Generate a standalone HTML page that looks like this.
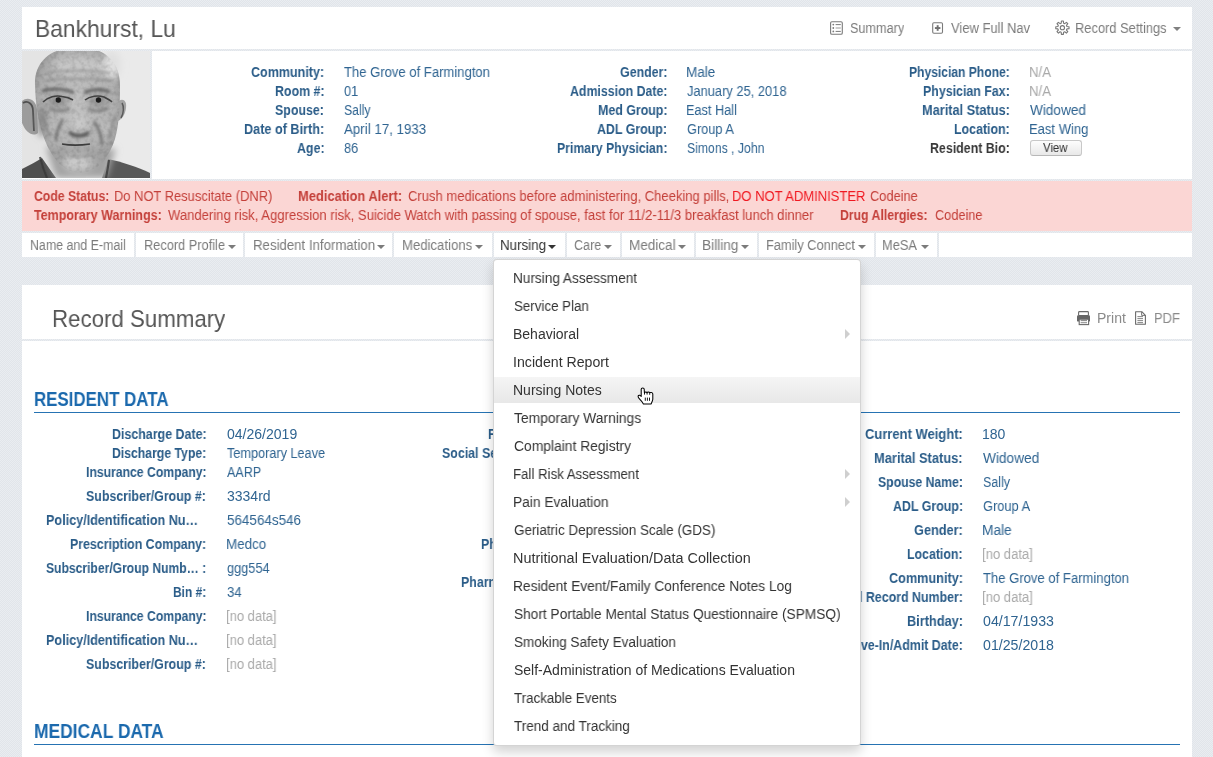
<!DOCTYPE html>
<html><head><meta charset="utf-8"><style>
html,body{margin:0;padding:0;}
body{width:1213px;height:757px;overflow:hidden;position:relative;background:#e5e9ee;background-image:repeating-conic-gradient(#e1e5ea 0 25%,#eaedf1 0 50%);background-size:2px 2px;font-family:"Liberation Sans",sans-serif;}
.t{position:absolute;white-space:nowrap;line-height:1;will-change:transform;transform-origin:0 0;}
</style></head><body>
<div style="position:absolute;left:22px;top:7px;width:1170px;height:42px;background:#fff;"></div>
<div class="t" style="left:34.55px;top:17.00px;font-size:24px;color:#555;transform:scaleX(0.9503);">Bankhurst, Lu</div>
<svg style="position:absolute;left:826px;top:16px" width="24" height="24" viewBox="0 0 24 24">
<rect x="4.6" y="5.7" width="11.7" height="12.6" rx="1.3" fill="none" stroke="#7a7a7a" stroke-width="1.1"/>
<circle cx="7.3" cy="8.6" r="0.9" fill="#7a7a7a"/><circle cx="7.3" cy="12" r="0.9" fill="#7a7a7a"/><circle cx="7.3" cy="15.4" r="0.9" fill="#7a7a7a"/>
<rect x="9.6" y="8.1" width="5.2" height="1" fill="#7a7a7a"/><rect x="9.6" y="11.5" width="5.2" height="1" fill="#999"/><rect x="9.6" y="14.9" width="5.2" height="1" fill="#7a7a7a"/>
</svg>
<div class="t" style="left:849.80px;top:21.00px;font-size:14px;color:#7b7b7b;transform:scaleX(0.9049);">Summary</div>
<svg style="position:absolute;left:926px;top:16px" width="24" height="24" viewBox="0 0 24 24">
<rect x="6.7" y="6.8" width="9.8" height="10.4" rx="1.2" fill="none" stroke="#7a7a7a" stroke-width="1.1"/>
<rect x="10.7" y="9.2" width="1.9" height="5.6" fill="#6f6f6f"/><rect x="8.9" y="11.1" width="5.5" height="1.9" fill="#6f6f6f"/>
</svg>
<div class="t" style="left:950.60px;top:21.00px;font-size:14px;color:#7b7b7b;transform:scaleX(0.9270);">View Full Nav</div>
<svg style="position:absolute;left:1050px;top:16px" width="24" height="24" viewBox="0 0 24 24">
<polygon points="11.18,7.16 11.41,5.07 13.39,5.07 13.62,7.16 14.75,7.63 16.39,6.31 17.79,7.71 16.47,9.35 16.94,10.48 19.03,10.71 19.03,12.69 16.94,12.92 16.47,14.05 17.79,15.69 16.39,17.09 14.75,15.77 13.62,16.24 13.39,18.33 11.41,18.33 11.18,16.24 10.05,15.77 8.41,17.09 7.01,15.69 8.33,14.05 7.86,12.92 5.77,12.69 5.77,10.71 7.86,10.48 8.33,9.35 7.01,7.71 8.41,6.31 10.05,7.63" fill="none" stroke="#777" stroke-width="1.1" stroke-linejoin="round"/>
<circle cx="12.4" cy="11.7" r="2.1" fill="none" stroke="#777" stroke-width="1.1"/>
</svg>
<div class="t" style="left:1075.08px;top:21.00px;font-size:14px;color:#7b7b7b;transform:scaleX(0.9198);">Record Settings</div>
<div style="position:absolute;left:1172.5px;top:26.5px;width:0;height:0;border-left:4px solid transparent;border-right:4px solid transparent;border-top:4px solid #808080;"></div>
<div style="position:absolute;left:22px;top:49px;width:1170px;height:2px;background:#e5e9ee;background-image:repeating-conic-gradient(#e1e5ea 0 25%,#eaedf1 0 50%);background-size:2px 2px;"></div>
<div style="position:absolute;left:22px;top:51px;width:1170px;height:128px;background:#fff;"></div>
<div style="position:absolute;left:150px;top:51px;width:2px;height:128px;background:#e5e9ee;background-image:repeating-conic-gradient(#e1e5ea 0 25%,#eaedf1 0 50%);background-size:2px 2px;"></div>
<div style="position:absolute;left:22px;top:179px;width:1170px;height:2px;background:#e5e9ee;background-image:repeating-conic-gradient(#e1e5ea 0 25%,#eaedf1 0 50%);background-size:2px 2px;"></div>
<svg style="position:absolute;left:22px;top:51px" width="128" height="127" viewBox="0 0 128 127">
<defs>
<radialGradient id="face" cx="0.5" cy="0.45" r="0.62"><stop offset="0" stop-color="#c2c2c2"/><stop offset="0.7" stop-color="#b0b0b0"/><stop offset="1" stop-color="#8e8e8e"/></radialGradient>
<filter id="bl" x="-20%" y="-20%" width="140%" height="140%"><feGaussianBlur stdDeviation="0.7"/></filter>
<filter id="bl2" x="-50%" y="-50%" width="200%" height="200%"><feGaussianBlur stdDeviation="1.4"/></filter>
<filter id="bl3" x="-50%" y="-50%" width="200%" height="200%"><feGaussianBlur stdDeviation="3.5"/></filter>
<filter id="tex" x="0" y="0" width="100%" height="100%"><feTurbulence type="fractalNoise" baseFrequency="0.22" numOctaves="2" seed="5"/><feColorMatrix type="matrix" values="0 0 0 0 0  0 0 0 0 0  0 0 0 0 0  0 0 0 1.2 -0.5"/><feComposite in2="SourceGraphic" operator="in"/></filter>
</defs>
<rect width="128" height="127" fill="#e4e4e4"/>
<rect x="64" width="64" height="127" fill="#eaeaea"/>
<g filter="url(#bl)">
<path d="M0,50 C6,45 14,49 15,58 L16,82 C11,86 4,82 0,72 Z" fill="#9c9c9c"/>
<path d="M1,52 C6,49 11,53 11,60 L12,80" stroke="#505050" stroke-width="1.8" fill="none"/>
<path d="M97,50 C101,47 105,50 104,57 C103,64 100,68 96,70 Z" fill="#a4a4a4"/>
<path d="M100,52 C102,55 102,62 99,67" stroke="#5a5a5a" stroke-width="1.5" fill="none"/>
<path d="M0,127 L0,118 C8,114 15,110 20,107 L34,127 Z" fill="#505050"/>
<path d="M128,127 L128,122 C116,116 100,111 86,108 L80,127 Z" fill="#585858"/>
<path d="M13,34 C12,10 30,-4 56,-4 C82,-4 98,10 98,34 C98,56 97,74 93,88 C87,106 78,118 64,121 C52,124 40,118 32,106 C22,92 14,70 13,34 Z" fill="url(#face)"/>
</g>
<g filter="url(#bl3)">
<path d="M24,96 L34,127 L84,127 L94,98 Z" fill="#a2a2a2"/>
<ellipse cx="90" cy="14" rx="9" ry="14" fill="#e0e0e0"/>
<ellipse cx="56" cy="16" rx="26" ry="10" fill="#c6c6c6"/>
<ellipse cx="20" cy="70" rx="5" ry="16" fill="#8a8a8a"/>
<ellipse cx="56" cy="112" rx="15" ry="8" fill="#cbcbcb"/>
<ellipse cx="57" cy="72" rx="7" ry="8" fill="#cacaca"/>
<ellipse cx="30" cy="76" rx="7" ry="8" fill="#b8b8b8"/>
<ellipse cx="84" cy="76" rx="6" ry="8" fill="#bcbcbc"/>
<ellipse cx="36" cy="50" rx="10" ry="6" fill="#8e8e8e"/>
<ellipse cx="76" cy="50" rx="10" ry="6" fill="#929292"/>
</g>
<path d="M13,34 C12,10 30,-4 56,-4 C82,-4 98,10 98,34 C98,56 97,74 93,88 C87,106 78,118 64,121 C52,124 40,118 32,106 C22,92 14,70 13,34 Z" fill="#000" filter="url(#tex)" opacity="0.22"/>
<g filter="url(#bl2)">
<path d="M24,22 C36,19 70,19 88,22 M22,30 C36,27 72,27 90,30" stroke="#8a8a8a" stroke-width="1.3" fill="none"/>
<path d="M20,40 C28,37 42,37 52,42" stroke="#555" stroke-width="2.6" fill="none"/>
<path d="M62,42 C70,38 80,38 88,41" stroke="#5a5a5a" stroke-width="2.6" fill="none"/>
<path d="M28,57 C33,61 42,61 48,57 M66,57 C71,61 80,61 86,57" stroke="#6e6e6e" stroke-width="1.8" fill="none"/>
<path d="M47,81 C52,86 62,86 67,81" stroke="#505050" stroke-width="3.2" fill="none"/>
<path d="M41,68 C36,76 34,84 34,90" stroke="#5c5c5c" stroke-width="2" fill="none"/>
<path d="M72,70 C77,78 80,86 80,94" stroke="#5c5c5c" stroke-width="2" fill="none"/>
<path d="M20,64 C22,72 25,80 29,86 M93,64 C91,74 89,82 86,88" stroke="#7c7c7c" stroke-width="1.5" fill="none"/>
<path d="M50,104 C55,106 62,106 68,104" stroke="#888" stroke-width="1.4" fill="none"/>
</g>
<g filter="url(#bl)">
<path d="M21,51 C26,46 34,44 40,45.5 C45,46 48,47 51,49" stroke="#404040" stroke-width="1.6" fill="none"/>
<path d="M63,49 C68,45 76,44 82,46 C86,48 89,50 90,51" stroke="#404040" stroke-width="1.6" fill="none"/>
<circle cx="36.3" cy="49" r="2.7" fill="#1e1e1e"/>
<circle cx="76.5" cy="49" r="2.7" fill="#1e1e1e"/>
<path d="M40,93 C48,94.5 58,94.5 68,93" stroke="#3c3c3c" stroke-width="1.7" fill="none"/>
<path d="M18,106 C20,114 22,120 25,127 M87,109 C86,116 85,122 84,127" stroke="#3a3a3a" stroke-width="2.2" fill="none" opacity="0.8"/>
</g>
</svg>
<div class="t" style="left:251.00px;top:65.00px;font-size:14px;color:#2a5c88;font-weight:bold;transform:scaleX(0.8951);">Community:</div>
<div class="t" style="left:344.00px;top:65.00px;font-size:14px;color:#2f6491;transform:scaleX(0.9331);">The Grove of Farmington</div>
<div class="t" style="left:274.53px;top:84.00px;font-size:14px;color:#2a5c88;font-weight:bold;transform:scaleX(0.8850);">Room #:</div>
<div class="t" style="left:344.00px;top:84.00px;font-size:14px;color:#2f6491;transform:scaleX(0.9122);">01</div>
<div class="t" style="left:275.21px;top:103.00px;font-size:14px;color:#2a5c88;font-weight:bold;transform:scaleX(0.8850);">Spouse:</div>
<div class="t" style="left:344.00px;top:103.00px;font-size:14px;color:#2f6491;transform:scaleX(0.8766);">Sally</div>
<div class="t" style="left:243.90px;top:122.00px;font-size:14px;color:#2a5c88;font-weight:bold;transform:scaleX(0.9045);">Date of Birth:</div>
<div class="t" style="left:344.00px;top:122.00px;font-size:14px;color:#2f6491;transform:scaleX(0.9514);">April 17, 1933</div>
<div class="t" style="left:296.55px;top:141.00px;font-size:14px;color:#2a5c88;font-weight:bold;transform:scaleX(0.8850);">Age:</div>
<div class="t" style="left:344.00px;top:141.00px;font-size:14px;color:#2f6491;transform:scaleX(0.9122);">86</div>
<div class="t" style="left:619.59px;top:65.00px;font-size:14px;color:#2a5c88;font-weight:bold;transform:scaleX(0.8850);">Gender:</div>
<div class="t" style="left:686.34px;top:65.00px;font-size:14px;color:#2f6491;transform:scaleX(0.9642);">Male</div>
<div class="t" style="left:569.60px;top:84.00px;font-size:14px;color:#2a5c88;font-weight:bold;transform:scaleX(0.8825);">Admission Date:</div>
<div class="t" style="left:687.30px;top:84.00px;font-size:14px;color:#2f6491;transform:scaleX(0.9197);">January 25, 2018</div>
<div class="t" style="left:597.58px;top:103.00px;font-size:14px;color:#2a5c88;font-weight:bold;transform:scaleX(0.8850);">Med Group:</div>
<div class="t" style="left:686.39px;top:103.00px;font-size:14px;color:#2f6491;transform:scaleX(0.9088);">East Hall</div>
<div class="t" style="left:596.89px;top:122.00px;font-size:14px;color:#2a5c88;font-weight:bold;transform:scaleX(0.8850);">ADL Group:</div>
<div class="t" style="left:687.30px;top:122.00px;font-size:14px;color:#2f6491;transform:scaleX(0.9129);">Group A</div>
<div class="t" style="left:556.70px;top:141.00px;font-size:14px;color:#2a5c88;font-weight:bold;transform:scaleX(0.8756);">Primary Physician:</div>
<div class="t" style="left:687.30px;top:141.00px;font-size:14px;color:#2f6491;transform:scaleX(0.8723);">Simons , John</div>
<div class="t" style="left:909.00px;top:65.00px;font-size:14px;color:#2a5c88;font-weight:bold;transform:scaleX(0.8635);">Physician Phone:</div>
<div class="t" style="left:1029.36px;top:65.00px;font-size:14px;color:#a8a8a8;transform:scaleX(0.9435);">N/A</div>
<div class="t" style="left:923.02px;top:84.00px;font-size:14px;color:#2a5c88;font-weight:bold;transform:scaleX(0.8850);">Physician Fax:</div>
<div class="t" style="left:1029.36px;top:84.00px;font-size:14px;color:#a8a8a8;transform:scaleX(0.9435);">N/A</div>
<div class="t" style="left:921.90px;top:103.00px;font-size:14px;color:#2a5c88;font-weight:bold;transform:scaleX(0.9113);">Marital Status:</div>
<div class="t" style="left:1030.30px;top:103.00px;font-size:14px;color:#2f6491;transform:scaleX(0.9720);">Widowed</div>
<div class="t" style="left:954.04px;top:122.00px;font-size:14px;color:#2a5c88;font-weight:bold;transform:scaleX(0.8850);">Location:</div>
<div class="t" style="left:1029.37px;top:122.00px;font-size:14px;color:#2f6491;transform:scaleX(0.9304);">East Wing</div>
<div class="t" style="left:929.94px;top:141.00px;font-size:14px;color:#383838;font-weight:bold;transform:scaleX(0.8850);">Resident Bio:</div>
<div style="position:absolute;left:1030px;top:139.5px;width:51.5px;height:16.5px;border:1px solid #c8c8c8;border-bottom-color:#b8b8b8;border-radius:3px;background:linear-gradient(#fdfdfd,#e8e8e8);box-sizing:border-box;"></div>
<div class="t" style="left:1043.00px;top:141.00px;font-size:13px;color:#333;transform:scaleX(0.8755);">View</div>
<div style="position:absolute;left:22px;top:181px;width:1170px;height:50px;background:#fbd6d4;"></div>
<div class="t" style="left:34.30px;top:189.00px;font-size:14px;color:#c4403a;font-weight:bold;transform:scaleX(0.8719);">Code Status:</div>
<div class="t" style="left:114.28px;top:189.00px;font-size:14px;color:#c4403a;transform:scaleX(0.9221);">Do NOT Resuscitate (DNR)</div>
<div class="t" style="left:297.60px;top:189.00px;font-size:14px;color:#c4403a;font-weight:bold;transform:scaleX(0.9203);">Medication Alert:</div>
<div class="t" style="left:408.40px;top:189.00px;font-size:14px;color:#c4403a;transform:scaleX(0.9303);">Crush medications before administering, Cheeking pills,</div>
<div class="t" style="left:731.77px;top:189.00px;font-size:14px;color:#f01820;transform:scaleX(0.9285);">DO NOT ADMINISTER</div>
<div class="t" style="left:869.70px;top:189.00px;font-size:14px;color:#c4403a;transform:scaleX(0.9166);">Codeine</div>
<div class="t" style="left:34.30px;top:208.00px;font-size:14px;color:#c4403a;font-weight:bold;transform:scaleX(0.8921);">Temporary Warnings:</div>
<div class="t" style="left:168.40px;top:208.00px;font-size:14px;color:#c4403a;transform:scaleX(0.9342);">Wandering risk, Aggression risk, Suicide Watch with passing of spouse, fast for 11/2-11/3 breakfast lunch dinner</div>
<div class="t" style="left:840.20px;top:208.00px;font-size:14px;color:#c4403a;font-weight:bold;transform:scaleX(0.8757);">Drug Allergies:</div>
<div class="t" style="left:935.00px;top:208.00px;font-size:14px;color:#c4403a;transform:scaleX(0.9109);">Codeine</div>
<div style="position:absolute;left:22px;top:233px;width:1170px;height:24px;background:#fff;"></div>
<div style="position:absolute;left:134.4px;top:233px;width:2px;height:24px;background:#e5e9ee;background-image:repeating-conic-gradient(#e1e5ea 0 25%,#eaedf1 0 50%);background-size:2px 2px;"></div>
<div style="position:absolute;left:242.6px;top:233px;width:2px;height:24px;background:#e5e9ee;background-image:repeating-conic-gradient(#e1e5ea 0 25%,#eaedf1 0 50%);background-size:2px 2px;"></div>
<div style="position:absolute;left:392.4px;top:233px;width:2px;height:24px;background:#e5e9ee;background-image:repeating-conic-gradient(#e1e5ea 0 25%,#eaedf1 0 50%);background-size:2px 2px;"></div>
<div style="position:absolute;left:491.8px;top:233px;width:2px;height:24px;background:#e5e9ee;background-image:repeating-conic-gradient(#e1e5ea 0 25%,#eaedf1 0 50%);background-size:2px 2px;"></div>
<div style="position:absolute;left:565px;top:233px;width:2px;height:24px;background:#e5e9ee;background-image:repeating-conic-gradient(#e1e5ea 0 25%,#eaedf1 0 50%);background-size:2px 2px;"></div>
<div style="position:absolute;left:619.6px;top:233px;width:2px;height:24px;background:#e5e9ee;background-image:repeating-conic-gradient(#e1e5ea 0 25%,#eaedf1 0 50%);background-size:2px 2px;"></div>
<div style="position:absolute;left:694.4px;top:233px;width:2px;height:24px;background:#e5e9ee;background-image:repeating-conic-gradient(#e1e5ea 0 25%,#eaedf1 0 50%);background-size:2px 2px;"></div>
<div style="position:absolute;left:756.7px;top:233px;width:2px;height:24px;background:#e5e9ee;background-image:repeating-conic-gradient(#e1e5ea 0 25%,#eaedf1 0 50%);background-size:2px 2px;"></div>
<div style="position:absolute;left:873.6px;top:233px;width:2px;height:24px;background:#e5e9ee;background-image:repeating-conic-gradient(#e1e5ea 0 25%,#eaedf1 0 50%);background-size:2px 2px;"></div>
<div style="position:absolute;left:936.8px;top:233px;width:2px;height:24px;background:#e5e9ee;background-image:repeating-conic-gradient(#e1e5ea 0 25%,#eaedf1 0 50%);background-size:2px 2px;"></div>
<div class="t" style="left:29.61px;top:238.00px;font-size:14px;color:#7b7b7b;transform:scaleX(0.8856);">Name and E-mail</div>
<div class="t" style="left:143.79px;top:238.00px;font-size:14px;color:#7b7b7b;transform:scaleX(0.9134);">Record Profile</div>
<div style="position:absolute;left:227.8px;top:245px;width:0;height:0;border-left:4px solid transparent;border-right:4px solid transparent;border-top:4px solid #7b7b7b;"></div>
<div class="t" style="left:252.55px;top:238.00px;font-size:14px;color:#7b7b7b;transform:scaleX(0.9451);">Resident Information</div>
<div style="position:absolute;left:376.7px;top:245px;width:0;height:0;border-left:4px solid transparent;border-right:4px solid transparent;border-top:4px solid #7b7b7b;"></div>
<div class="t" style="left:401.86px;top:238.00px;font-size:14px;color:#7b7b7b;transform:scaleX(0.9389);">Medications</div>
<div style="position:absolute;left:474.8px;top:245px;width:0;height:0;border-left:4px solid transparent;border-right:4px solid transparent;border-top:4px solid #7b7b7b;"></div>
<div class="t" style="left:499.75px;top:238.00px;font-size:14px;color:#333;transform:scaleX(0.9536);">Nursing</div>
<div style="position:absolute;left:547.8px;top:245px;width:0;height:0;border-left:4px solid transparent;border-right:4px solid transparent;border-top:4px solid #333;"></div>
<div class="t" style="left:574.00px;top:238.00px;font-size:14px;color:#7b7b7b;transform:scaleX(0.8999);">Care</div>
<div style="position:absolute;left:604.3px;top:245px;width:0;height:0;border-left:4px solid transparent;border-right:4px solid transparent;border-top:4px solid #7b7b7b;"></div>
<div class="t" style="left:628.53px;top:238.00px;font-size:14px;color:#7b7b7b;transform:scaleX(0.9654);">Medical</div>
<div style="position:absolute;left:677.8px;top:245px;width:0;height:0;border-left:4px solid transparent;border-right:4px solid transparent;border-top:4px solid #7b7b7b;"></div>
<div class="t" style="left:702.32px;top:238.00px;font-size:14px;color:#7b7b7b;transform:scaleX(0.9757);">Billing</div>
<div style="position:absolute;left:740.8px;top:245px;width:0;height:0;border-left:4px solid transparent;border-right:4px solid transparent;border-top:4px solid #7b7b7b;"></div>
<div class="t" style="left:765.88px;top:238.00px;font-size:14px;color:#7b7b7b;transform:scaleX(0.9153);">Family Connect</div>
<div style="position:absolute;left:857.8px;top:245px;width:0;height:0;border-left:4px solid transparent;border-right:4px solid transparent;border-top:4px solid #7b7b7b;"></div>
<div class="t" style="left:882.48px;top:238.00px;font-size:14px;color:#7b7b7b;transform:scaleX(0.9157);">MeSA</div>
<div style="position:absolute;left:920.8px;top:245px;width:0;height:0;border-left:4px solid transparent;border-right:4px solid transparent;border-top:4px solid #7b7b7b;"></div>
<div style="position:absolute;left:22px;top:285px;width:1170px;height:472px;background:#fff;"></div>
<div style="position:absolute;left:22px;top:339px;width:1170px;height:2px;background:#e5e9ee;background-image:repeating-conic-gradient(#e1e5ea 0 25%,#eaedf1 0 50%);background-size:2px 2px;"></div>
<div class="t" style="left:51.77px;top:307.00px;font-size:24px;color:#555;transform:scaleX(0.9278);">Record Summary</div>
<svg style="position:absolute;left:1072px;top:306px" width="24" height="24" viewBox="0 0 24 24">
<rect x="6.6" y="5.6" width="9.8" height="4" rx="0.8" fill="none" stroke="#6a6a6a" stroke-width="1.1"/>
<rect x="5" y="9.2" width="13" height="6.4" rx="1.2" fill="#666"/>
<rect x="7.2" y="13.2" width="9.4" height="5.4" fill="#fff" stroke="#6a6a6a" stroke-width="1.1"/>
<rect x="8.6" y="14.2" width="6.4" height="0.9" fill="#777"/><rect x="8.6" y="16.3" width="6.4" height="0.9" fill="#777"/>
</svg>
<div class="t" style="left:1096.60px;top:311.00px;font-size:14px;color:#8a8a8a;transform:scaleX(1.0037);">Print</div>
<svg style="position:absolute;left:1128px;top:306px" width="24" height="24" viewBox="0 0 24 24">
<path d="M7.6,5.7 L13.8,5.7 L17.4,9.3 L17.4,18.2 L7.6,18.2 Z" fill="none" stroke="#6a6a6a" stroke-width="1.1" stroke-linejoin="round"/>
<path d="M13.6,5.9 L13.6,9.4 L17.2,9.4" fill="none" stroke="#6a6a6a" stroke-width="0.9"/>
<rect x="9.4" y="10.2" width="5.6" height="0.9" fill="#777"/><rect x="9.4" y="12.2" width="5.6" height="0.9" fill="#777"/><rect x="9.4" y="14.2" width="5.6" height="0.9" fill="#777"/><rect x="9.4" y="16.2" width="5.6" height="0.9" fill="#777"/>
</svg>
<div class="t" style="left:1153.88px;top:311.00px;font-size:14px;color:#8a8a8a;transform:scaleX(0.9226);">PDF</div>
<div class="t" style="left:34.13px;top:390.00px;font-size:19.5px;color:#1b69ad;font-weight:bold;transform:scaleX(0.8664);">RESIDENT DATA</div>
<div style="position:absolute;left:34px;top:411.5px;width:1146px;height:1.5px;background:#2673b3;"></div>
<div class="t" style="left:33.71px;top:722.00px;font-size:19.5px;color:#1b69ad;font-weight:bold;transform:scaleX(0.8932);">MEDICAL DATA</div>
<div style="position:absolute;left:34px;top:743.5px;width:1146px;height:1.5px;background:#2673b3;"></div>
<div class="t" style="left:111.60px;top:427.00px;font-size:14px;color:#2a5c88;font-weight:bold;transform:scaleX(0.8874);">Discharge Date:</div>
<div class="t" style="left:226.60px;top:427.00px;font-size:14px;color:#2f6491;transform:scaleX(1.0017);">04/26/2019</div>
<div class="t" style="left:112.00px;top:446.00px;font-size:14px;color:#2a5c88;font-weight:bold;transform:scaleX(0.8729);">Discharge Type:</div>
<div class="t" style="left:226.60px;top:446.00px;font-size:14px;color:#2f6491;transform:scaleX(0.9061);">Temporary Leave</div>
<div class="t" style="left:85.60px;top:465.00px;font-size:14px;color:#2a5c88;font-weight:bold;transform:scaleX(0.8707);">Insurance Company:</div>
<div class="t" style="left:226.60px;top:465.00px;font-size:14px;color:#2f6491;transform:scaleX(0.8972);">AARP</div>
<div class="t" style="left:86.40px;top:489.00px;font-size:14px;color:#2a5c88;font-weight:bold;transform:scaleX(0.8850);">Subscriber/Group #:</div>
<div class="t" style="left:226.60px;top:489.00px;font-size:14px;color:#2f6491;transform:scaleX(0.9998);">3334rd</div>
<div class="t" style="left:46.30px;top:513.00px;font-size:14px;color:#2a5c88;font-weight:bold;transform:scaleX(0.9011);">Policy/Identification Nu…</div>
<div class="t" style="left:226.60px;top:513.00px;font-size:14px;color:#2f6491;transform:scaleX(0.9600);">564564s546</div>
<div class="t" style="left:70.00px;top:537.00px;font-size:14px;color:#2a5c88;font-weight:bold;transform:scaleX(0.8842);">Prescription Company:</div>
<div class="t" style="left:225.64px;top:537.00px;font-size:14px;color:#2f6491;transform:scaleX(0.9555);">Medco</div>
<div class="t" style="left:46.00px;top:561.00px;font-size:14px;color:#2a5c88;font-weight:bold;transform:scaleX(0.8652);">Subscriber/Group Numb… :</div>
<div class="t" style="left:226.60px;top:561.00px;font-size:14px;color:#2f6491;transform:scaleX(0.9120);">ggg554</div>
<div class="t" style="left:173.00px;top:585.00px;font-size:14px;color:#2a5c88;font-weight:bold;transform:scaleX(0.8528);">Bin #:</div>
<div class="t" style="left:226.60px;top:585.00px;font-size:14px;color:#2f6491;transform:scaleX(0.9439);">34</div>
<div class="t" style="left:85.60px;top:609.00px;font-size:14px;color:#2a5c88;font-weight:bold;transform:scaleX(0.8707);">Insurance Company:</div>
<div class="t" style="left:225.67px;top:609.00px;font-size:14px;color:#a9a9a9;transform:scaleX(0.9278);">[no data]</div>
<div class="t" style="left:46.30px;top:633.00px;font-size:14px;color:#2a5c88;font-weight:bold;transform:scaleX(0.9011);">Policy/Identification Nu…</div>
<div class="t" style="left:225.67px;top:633.00px;font-size:14px;color:#a9a9a9;transform:scaleX(0.9278);">[no data]</div>
<div class="t" style="left:86.40px;top:657.00px;font-size:14px;color:#2a5c88;font-weight:bold;transform:scaleX(0.8850);">Subscriber/Group #:</div>
<div class="t" style="left:225.67px;top:657.00px;font-size:14px;color:#a9a9a9;transform:scaleX(0.9278);">[no data]</div>
<div class="t" style="left:487.50px;top:427.00px;font-size:14px;color:#2a5c88;font-weight:bold;transform:scaleX(0.8850);">First Name:</div>
<div class="t" style="left:442.00px;top:446.00px;font-size:14px;color:#2a5c88;font-weight:bold;transform:scaleX(0.8850);">Social Security Number:</div>
<div class="t" style="left:480.70px;top:537.00px;font-size:14px;color:#2a5c88;font-weight:bold;transform:scaleX(0.8850);">Phone Number:</div>
<div class="t" style="left:460.60px;top:575.00px;font-size:14px;color:#2a5c88;font-weight:bold;transform:scaleX(0.8850);">Pharmacy Phone:</div>
<div class="t" style="left:865.20px;top:427.00px;font-size:14px;color:#2a5c88;font-weight:bold;transform:scaleX(0.9270);">Current Weight:</div>
<div class="t" style="left:981.50px;top:427.00px;font-size:14px;color:#2f6491;transform:scaleX(0.9968);">180</div>
<div class="t" style="left:874.40px;top:451.00px;font-size:14px;color:#2a5c88;font-weight:bold;transform:scaleX(0.9186);">Marital Status:</div>
<div class="t" style="left:982.50px;top:451.00px;font-size:14px;color:#2f6491;transform:scaleX(0.9772);">Widowed</div>
<div class="t" style="left:878.00px;top:475.00px;font-size:14px;color:#2a5c88;font-weight:bold;transform:scaleX(0.8738);">Spouse Name:</div>
<div class="t" style="left:982.50px;top:475.00px;font-size:14px;color:#2f6491;transform:scaleX(0.8931);">Sally</div>
<div class="t" style="left:892.70px;top:499.00px;font-size:14px;color:#2a5c88;font-weight:bold;transform:scaleX(0.8861);">ADL Group:</div>
<div class="t" style="left:982.50px;top:499.00px;font-size:14px;color:#2f6491;transform:scaleX(0.9186);">Group A</div>
<div class="t" style="left:914.20px;top:523.00px;font-size:14px;color:#2a5c88;font-weight:bold;transform:scaleX(0.9092);">Gender:</div>
<div class="t" style="left:981.52px;top:523.00px;font-size:14px;color:#2f6491;transform:scaleX(0.9777);">Male</div>
<div class="t" style="left:907.40px;top:547.00px;font-size:14px;color:#2a5c88;font-weight:bold;transform:scaleX(0.8824);">Location:</div>
<div class="t" style="left:981.57px;top:547.00px;font-size:14px;color:#a9a9a9;transform:scaleX(0.9335);">[no data]</div>
<div class="t" style="left:889.00px;top:571.00px;font-size:14px;color:#2a5c88;font-weight:bold;transform:scaleX(0.9062);">Community:</div>
<div class="t" style="left:982.50px;top:571.00px;font-size:14px;color:#2f6491;transform:scaleX(0.9337);">The Grove of Farmington</div>
<div class="t" style="left:817.04px;top:590.00px;font-size:14px;color:#2a5c88;font-weight:bold;transform:scaleX(0.8850);">Medical Record Number:</div>
<div class="t" style="left:981.57px;top:590.00px;font-size:14px;color:#a9a9a9;transform:scaleX(0.9335);">[no data]</div>
<div class="t" style="left:907.00px;top:614.00px;font-size:14px;color:#2a5c88;font-weight:bold;transform:scaleX(0.9114);">Birthday:</div>
<div class="t" style="left:982.50px;top:614.00px;font-size:14px;color:#2f6491;transform:scaleX(1.0116);">04/17/1933</div>
<div class="t" style="left:843.22px;top:638.00px;font-size:14px;color:#2a5c88;font-weight:bold;transform:scaleX(0.8850);">Move-In/Admit Date:</div>
<div class="t" style="left:982.50px;top:638.00px;font-size:14px;color:#2f6491;transform:scaleX(1.0116);">01/25/2018</div>
<div style="position:absolute;left:493px;top:259px;width:368px;height:487px;box-sizing:border-box;background:#fff;border:1px solid rgba(0,0,0,0.17);border-radius:4px;box-shadow:0 6px 12px rgba(0,0,0,0.175);"></div>
<div style="position:absolute;left:494px;top:377px;width:366px;height:26px;background:linear-gradient(#f5f5f5,#e8e8e8);"></div>
<div class="t" style="left:512.93px;top:271.00px;font-size:14px;color:#333;transform:scaleX(0.9718);">Nursing Assessment</div>
<div class="t" style="left:513.90px;top:299.00px;font-size:14px;color:#333;transform:scaleX(0.9524);">Service Plan</div>
<div class="t" style="left:512.91px;top:327.00px;font-size:14px;color:#333;transform:scaleX(0.9948);">Behavioral</div>
<div class="t" style="left:512.89px;top:355.00px;font-size:14px;color:#333;transform:scaleX(1.0111);">Incident Report</div>
<div class="t" style="left:512.90px;top:383.00px;font-size:14px;color:#333;transform:scaleX(0.9977);">Nursing Notes</div>
<div class="t" style="left:513.90px;top:411.00px;font-size:14px;color:#333;transform:scaleX(0.9881);">Temporary Warnings</div>
<div class="t" style="left:513.90px;top:439.00px;font-size:14px;color:#333;transform:scaleX(0.9893);">Complaint Registry</div>
<div class="t" style="left:512.95px;top:467.00px;font-size:14px;color:#333;transform:scaleX(0.9465);">Fall Risk Assessment</div>
<div class="t" style="left:512.92px;top:495.00px;font-size:14px;color:#333;transform:scaleX(0.9822);">Pain Evaluation</div>
<div class="t" style="left:513.90px;top:523.00px;font-size:14px;color:#333;transform:scaleX(0.9585);">Geriatric Depression Scale (GDS)</div>
<div class="t" style="left:512.87px;top:551.00px;font-size:14px;color:#333;transform:scaleX(1.0286);">Nutritional Evaluation/Data Collection</div>
<div class="t" style="left:512.92px;top:579.00px;font-size:14px;color:#333;transform:scaleX(0.9818);">Resident Event/Family Conference Notes Log</div>
<div class="t" style="left:513.90px;top:607.00px;font-size:14px;color:#333;transform:scaleX(0.9782);">Short Portable Mental Status Questionnaire (SPMSQ)</div>
<div class="t" style="left:513.90px;top:635.00px;font-size:14px;color:#333;transform:scaleX(0.9674);">Smoking Safety Evaluation</div>
<div class="t" style="left:513.90px;top:663.00px;font-size:14px;color:#333;transform:scaleX(0.9995);">Self-Administration of Medications Evaluation</div>
<div class="t" style="left:513.90px;top:691.00px;font-size:14px;color:#333;transform:scaleX(0.9532);">Trackable Events</div>
<div class="t" style="left:513.90px;top:719.00px;font-size:14px;color:#333;transform:scaleX(0.9643);">Trend and Tracking</div>
<div style="position:absolute;left:845px;top:329px;width:0;height:0;border-top:5px solid transparent;border-bottom:5px solid transparent;border-left:5px solid #cfcfcf;"></div>
<div style="position:absolute;left:845px;top:469px;width:0;height:0;border-top:5px solid transparent;border-bottom:5px solid transparent;border-left:5px solid #cfcfcf;"></div>
<div style="position:absolute;left:845px;top:497px;width:0;height:0;border-top:5px solid transparent;border-bottom:5px solid transparent;border-left:5px solid #cfcfcf;"></div>
<svg style="position:absolute;left:632px;top:382px" width="28" height="28" viewBox="0 0 28 28">
<path d="M9.2,7.2 C9.2,5.5 12.2,5.5 12.2,7.2 L12.4,10.8 C12.8,9.8 14.8,9.8 15,10.8 C15.4,9.8 17.4,9.8 17.6,11 C18,10.2 20.8,10.4 20.8,12 L20.8,17.2 C20.6,19 19.6,20.6 19,22 L11.4,22 C10.4,20 8.6,18 7,16.4 C5.6,15 5.8,13 7.6,13.2 L9.2,14.4 Z" fill="#fff" stroke="#000" stroke-width="1.05" stroke-linejoin="round"/>
<path d="M13.3,15.6 V18.8 M15.4,15.6 V18.8 M17.5,15.6 V18.8 M12.5,11 V12.6 M15.1,11 V12.6 M17.7,11.2 V12.8" stroke="#000" stroke-width="0.9"/>
</svg>
</body></html>
